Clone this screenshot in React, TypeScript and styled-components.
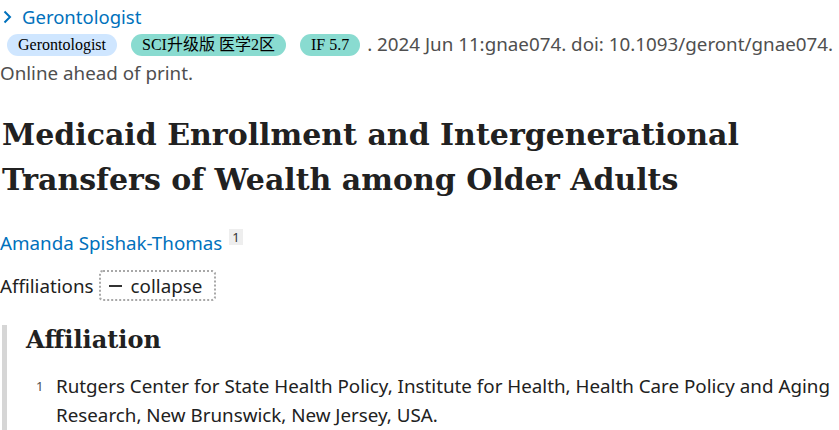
import React from "react";
import styled, { createGlobalStyle } from "styled-components";

const Global = createGlobalStyle`
  html, body { margin: 0; padding: 0; background: #fff; }
  body { font-family: "Noto Sans", "Open Sans", sans-serif; color: #212121; }
  * { box-sizing: border-box; }
`;

const Page = styled.div`
  width: 839px;
  height: 430px;
  overflow: hidden;
  padding: 0 0 0 2px;
`;

const JournalLink = styled.a`
  display: flex;
  align-items: center;
  gap: 10px;
  color: #0071bc;
  font-size: 18.5px;
  line-height: 26px;
  margin-top: 4px;
  padding-left: 1px;
  text-decoration: none;
`;

const Citation = styled.div`
  display: flex;
  flex-wrap: wrap;
  align-items: center;
  font-size: 18.8px;
  line-height: 29px;
  color: #4f4f4f;
  margin-left: -2px;
`;

const CiteText = styled.span`
  white-space: nowrap;
  margin-right: 5px;
`;

const Badge = styled.span<{ $bg: string }>`
  display: inline-block;
  font-family: "Liberation Serif", "Noto Sans CJK SC", serif;
  font-size: 16px;
  line-height: 22px;
  color: #000;
  background: ${(p) => p.$bg};
  border-radius: 12px;
  padding: 0 11px;
  margin: 0 7px;
`;

const Title = styled.h1`
  font-family: "DejaVu Serif", serif;
  font-weight: 700;
  font-size: 30px;
  line-height: 45px;
  color: #212121;
  margin: 24px 0 0 0;
`;

const Authors = styled.div`
  margin-top: 27px;
  font-size: 18.8px;
  line-height: 26px;
  margin-left: -2px;
`;

const AuthorLink = styled.a`
  color: #0071bc;
  text-decoration: none;
`;

const Sup = styled.sup`
  display: inline-block;
  background: #eeeeee;
  color: #333;
  font-size: 13px;
  line-height: 16px;
  padding: 0 3px;
  margin-left: 7px;
  vertical-align: 8px;
`;

const AffRow = styled.div`
  display: flex;
  align-items: center;
  gap: 5px;
  margin-top: 14px;
  margin-left: -2px;
  font-size: 18.8px;
`;

const Toggle = styled.button`
  display: flex;
  align-items: center;
  gap: 9px;
  font-family: inherit;
  font-size: 18.8px;
  color: #212121;
  background: #fff;
  border: 2px dotted #a8a8a8;
  border-radius: 4px;
  height: 31px;
  padding: 0 12px 0 8px;
`;

const Dash = styled.span`
  display: inline-block;
  width: 13px;
  height: 2px;
  background: #333;
`;

const Panel = styled.div`
  margin-top: 24px;
  border-left: 5px solid #d6d6d6;
  padding: 0 0 10px 19px;
`;

const PanelTitle = styled.h3`
  font-family: "DejaVu Serif", serif;
  font-weight: 700;
  font-size: 24px;
  line-height: 30px;
  margin: 0;
  color: #212121;
`;

const List = styled.ol`
  list-style: none;
  margin: 17px 0 0 0;
  padding: 0;
`;

const Item = styled.li`
  display: flex;
  gap: 10px;
  font-size: 18.8px;
  line-height: 29px;
  padding-left: 10px;
`;

const Num = styled.span`
  font-size: 13px;
  color: #4f4f4f;
  flex: none;
  width: 10px;
`;

export default function App() {
  return (
    <Page>
      <Global />
      <JournalLink href="#">
        <svg width="9" height="14" viewBox="0 0 9 14">
          <path d="M1.5 1.5 L7 7 L1.5 12.5" fill="none" stroke="#0071bc" strokeWidth="2" />
        </svg>
        Gerontologist
      </JournalLink>
      <Citation>
        <Badge $bg="#cfe6ff">Gerontologist</Badge>
        <Badge $bg="#89dbd0">SCI升级版 医学2区</Badge>
        <Badge $bg="#89dbd0">IF 5.7</Badge>
        <CiteText>. 2024 Jun 11:gnae074. doi: 10.1093/geront/gnae074.</CiteText>
        <CiteText>Online ahead of print.</CiteText>
      </Citation>
      <Title>
        Medicaid Enrollment and Intergenerational Transfers of Wealth among Older Adults
      </Title>
      <Authors>
        <AuthorLink href="#">Amanda Spishak-Thomas</AuthorLink>
        <Sup>1</Sup>
      </Authors>
      <AffRow>
        Affiliations
        <Toggle>
          <Dash />
          collapse
        </Toggle>
      </AffRow>
      <Panel>
        <PanelTitle>Affiliation</PanelTitle>
        <List>
          <Item>
            <Num>1</Num>
            <span>
              Rutgers Center for State Health Policy, Institute for Health, Health Care Policy and Aging
              Research, New Brunswick, New Jersey, USA.
            </span>
          </Item>
        </List>
      </Panel>
    </Page>
  );
}
